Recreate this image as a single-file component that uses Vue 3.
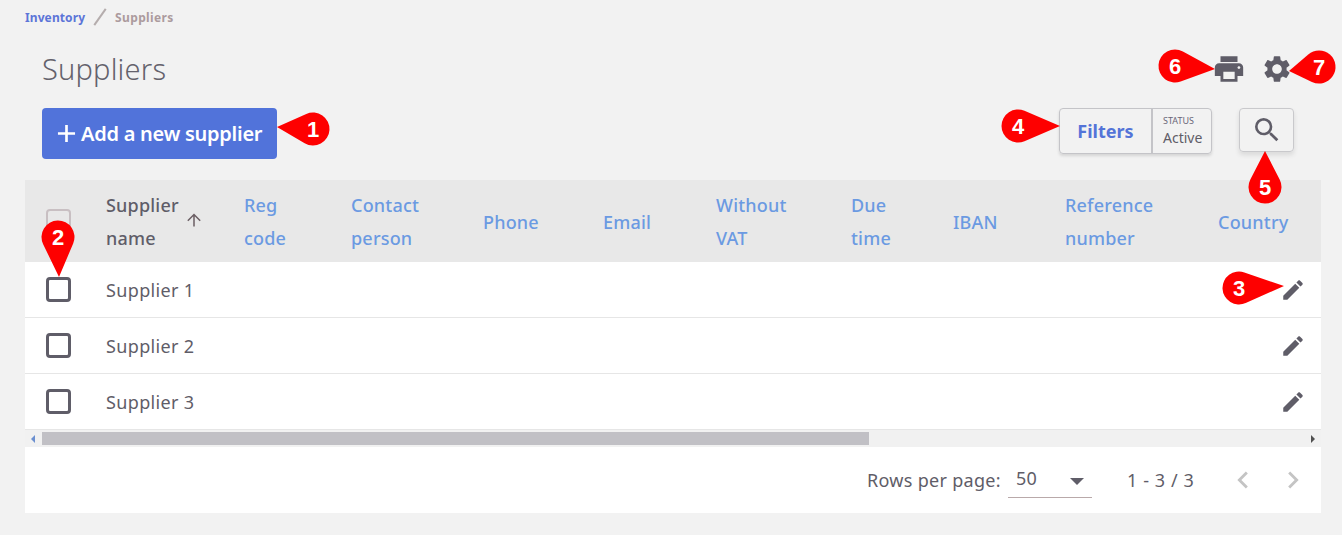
<template>
  <div class="page">
    <nav class="crumbs">
      <span class="crumb-link">Inventory</span>
      <span class="crumb-sep"></span>
      <span class="crumb-current">Suppliers</span>
    </nav>

    <div class="title-row">
      <h1 class="title">Suppliers</h1>
      <div class="title-icons">
        <svg class="icon-print" viewBox="0 0 24 24"><path d="M19 8H5c-1.66 0-3 1.34-3 3v6h4v4h12v-4h4v-6c0-1.66-1.34-3-3-3zm-3 11H8v-5h8v5zm3-7c-.55 0-1-.45-1-1s.45-1 1-1 1 .45 1 1-.45 1-1 1zm-1-9H6v4h12V3z" /></svg>
        <svg class="icon-gear" viewBox="0 0 24 24"><path d="M19.14 12.94c.04-.3.06-.61.06-.94 0-.32-.02-.64-.07-.94l2.03-1.58a.49.49 0 0 0 .12-.61l-1.92-3.32a.488.488 0 0 0-.59-.22l-2.39.96c-.5-.38-1.03-.7-1.62-.94l-.36-2.54a.484.484 0 0 0-.48-.41h-3.84c-.24 0-.43.17-.47.41l-.36 2.54c-.59.24-1.13.57-1.62.94l-2.39-.96c-.22-.08-.47 0-.59.22L2.74 8.87c-.12.21-.08.47.12.61l2.03 1.58c-.05.3-.09.63-.09.94s.02.64.07.94l-2.03 1.58a.49.49 0 0 0-.12.61l1.92 3.32c.12.22.37.29.59.22l2.39-.96c.5.38 1.03.7 1.62.94l.36 2.54c.05.24.24.41.48.41h3.84c.24 0 .44-.17.47-.41l.36-2.54c.59-.24 1.13-.56 1.62-.94l2.39.96c.22.08.47 0 .59-.22l1.92-3.32c.12-.22.07-.47-.12-.61l-2.01-1.58zM12 15.6c-1.98 0-3.6-1.62-3.6-3.6s1.62-3.6 3.6-3.6 3.6 1.62 3.6 3.6-1.62 3.6-3.6 3.6z" /></svg>
      </div>
    </div>

    <div class="action-row">
      <button class="add-btn">
        <svg class="add-plus" viewBox="0 0 20 20"><path d="M10 1v18M1 10h18" /></svg>
        Add a new supplier
      </button>
      <div class="actions-right">
        <div class="filters">
          <div class="filters-btn">Filters</div>
          <div class="filters-status">
            <span class="status-label">STATUS</span>
            <span class="status-value">Active</span>
          </div>
        </div>
        <button class="search-btn">
          <svg viewBox="0 0 24 24"><path d="M15.5 14h-.79l-.28-.27A6.471 6.471 0 0 0 16 9.5 6.5 6.5 0 1 0 9.5 16c1.61 0 3.09-.59 4.23-1.57l.27.28v.79l5 4.99L20.49 19l-4.99-5zm-6 0C7.01 14 5 11.99 5 9.5S7.01 5 9.5 5 14 7.01 14 9.5 11.99 14 9.5 14z" /></svg>
        </button>
      </div>
    </div>

    <div class="table-card">
      <div class="row head">
        <div class="cell-check"><span class="checkbox disabled"></span></div>
        <div class="head-sort">
          <span>Supplier<br />name</span>
          <svg class="sort-arrow" viewBox="0 0 16 16"><path d="M8 12V3.3M3.5 7.8 8 3.3l4.5 4.5" /></svg>
        </div>
        <div v-for="col in columns" :key="col" class="head-cell" v-html="col"></div>
      </div>

      <div v-for="name in suppliers" :key="name" class="row body">
        <div class="cell-check"><span class="checkbox"></span></div>
        <div class="cell-name">{{ name }}</div>
        <div class="cell-edit">
          <svg viewBox="0 0 24 24"><path d="M3 17.25V21h3.75L17.81 9.94l-3.75-3.75L3 17.25zM20.71 7.04c.39-.39.39-1.02 0-1.41l-2.34-2.34c-.39-.39-1.02-.39-1.41 0l-1.83 1.83 3.75 3.75 1.83-1.83z" /></svg>
        </div>
      </div>

      <div class="scrollbar">
        <span class="scroll-arrow left"></span>
        <div class="scroll-track"><div class="scroll-thumb"></div></div>
        <span class="scroll-arrow right"></span>
      </div>

      <div class="pager">
        <span class="pager-label">Rows per page:</span>
        <div class="pager-select">
          <span class="select-value">50</span>
          <span class="select-caret"></span>
        </div>
        <span class="pager-range">1 - 3 / 3</span>
        <svg class="pager-nav" viewBox="0 0 24 24"><path d="M15.41 7.41 14 6l-6 6 6 6 1.41-1.41L10.83 12z" /></svg>
        <svg class="pager-nav" viewBox="0 0 24 24"><path d="M10 6 8.59 7.41 13.17 12l-4.58 4.59L10 18l6-6z" /></svg>
      </div>
    </div>

    <!-- numbered callouts lying over the screenshot -->
    <svg class="callouts" width="1342" height="535">
      <g v-for="m in markers" :key="m.n">
        <path :d="m.d" fill="#fe0000" />
        <text :x="m.x" :y="m.y + 8" text-anchor="middle" class="callout-num">{{ m.n }}</text>
      </g>
    </svg>
  </div>
</template>

<script setup>
const columns = [
  'Reg<br>code',
  'Contact<br>person',
  'Phone',
  'Email',
  'Without<br>VAT',
  'Due<br>time',
  'IBAN',
  'Reference<br>number',
  'Country'
]

const suppliers = ['Supplier 1', 'Supplier 2', 'Supplier 3']

// teardrop: circle at x,y with a point running out to tx,ty
function drop(n, x, y, tx, ty, r = 16.5) {
  const dist = Math.hypot(tx - x, ty - y)
  const dir = Math.atan2(ty - y, tx - x)
  const spread = Math.acos(r / dist)
  const ax = x + r * Math.cos(dir + spread)
  const ay = y + r * Math.sin(dir + spread)
  const bx = x + r * Math.cos(dir - spread)
  const by = y + r * Math.sin(dir - spread)
  return { n, x, y, d: `M${tx} ${ty}L${ax} ${ay}A${r} ${r} 0 1 1 ${bx} ${by}Z` }
}

const markers = [
  drop(1, 313, 129, 277, 127),
  drop(2, 58, 237, 59, 277),
  drop(3, 1239, 288, 1284, 286),
  drop(4, 1018, 126, 1060, 126),
  drop(5, 1265, 187, 1265, 151),
  drop(6, 1175, 66, 1215, 69),
  drop(7, 1319, 67, 1289, 71)
]
</script>

<style>
html,
body {
  margin: 0;
  background: #f2f2f2;
}
</style>

<style scoped>
.page {
  position: relative;
  width: 1342px;
  height: 535px;
  overflow: hidden;
  background: #f2f2f2;
  font-family: "Noto Sans", "Open Sans", sans-serif;
  color: #5f5d68;
}

.crumbs {
  display: flex;
  align-items: center;
  height: 18px;
  padding: 8px 0 0 25px;
  font-size: 12px;
  font-weight: 700;
}

.crumb-link {
  color: #5c75d8;
  letter-spacing: 0.1px;
}

.crumb-sep {
  width: 2px;
  height: 20px;
  margin: 0 14px 0 14px;
  background: #b5adad;
  transform: rotate(35deg);
}

.crumb-current {
  color: #ac9b9e;
  letter-spacing: 0.35px;
}

.title-row {
  display: flex;
  align-items: center;
  justify-content: space-between;
  height: 50px;
  margin-top: 17px;
  padding: 0 49px 0 42px;
}

.title {
  margin: 0;
  font-size: 29px;
  font-weight: 300;
  letter-spacing: 0.2px;
  color: #64626c;
}

.title-icons {
  display: flex;
  align-items: center;
  gap: 15px;
  margin-top: 2px;
}

.icon-print {
  width: 34px;
  height: 34px;
  fill: #5f5d68;
}

.icon-gear {
  width: 32px;
  height: 32px;
  fill: #5f5d68;
}

.action-row {
  display: flex;
  align-items: flex-start;
  justify-content: space-between;
  height: 72px;
  margin-top: 15px;
  padding: 0 48px 0 42px;
}

.add-btn {
  display: flex;
  align-items: center;
  gap: 5px;
  width: 235px;
  height: 51px;
  padding: 0 0 0 15px;
  border: none;
  border-radius: 4px;
  background: #5173da;
  color: #fff;
  font-family: inherit;
  font-size: 20px;
  font-weight: 600;
  letter-spacing: -0.25px;
}

.add-plus {
  width: 19px;
  height: 19px;
  fill: none;
  stroke: #fff;
  stroke-width: 2.8;
}

.actions-right {
  display: flex;
  align-items: flex-start;
  gap: 27px;
}

.filters {
  display: flex;
  height: 46px;
  box-sizing: border-box;
  border: 1px solid #c4c4c8;
  border-radius: 4px;
  box-shadow: 0 2px 3px rgba(0, 0, 0, 0.12);
}

.filters-btn {
  display: flex;
  align-items: center;
  justify-content: center;
  width: 91px;
  border-right: 2px solid #c4c4c8;
  font-size: 18px;
  font-weight: 700;
  color: #5474d8;
}

.filters-status {
  display: flex;
  flex-direction: column;
  justify-content: center;
  width: 58px;
  padding-left: 10px;
  box-sizing: border-box;
}

.status-label {
  font-size: 9px;
  line-height: 13px;
  color: #6a6678;
}

.status-value {
  font-size: 14px;
  line-height: 21px;
}

.search-btn {
  display: flex;
  align-items: center;
  justify-content: center;
  width: 55px;
  height: 44px;
  padding: 0;
  border: 1px solid #c9c9cc;
  border-radius: 4px;
  background: transparent;
  box-shadow: 0 3px 5px rgba(0, 0, 0, 0.1);
}

.search-btn svg {
  width: 32px;
  height: 32px;
  fill: #5f5d68;
}

.table-card {
  width: 1296px;
  margin-left: 25px;
  background: #fff;
}

.row {
  display: grid;
  grid-template-columns: 81px 138px 107px 132px 120px 113px 135px 102px 112px 153px 103px;
  align-items: center;
}

.head {
  height: 82px;
  background: #e8e8e8;
  font-size: 18px;
  font-weight: 500;
  line-height: 33px;
  letter-spacing: 0.2px;
}

.cell-check {
  display: flex;
  padding-left: 21px;
}

.checkbox {
  width: 25px;
  height: 25px;
  box-sizing: border-box;
  border: 3px solid #5f5d68;
  border-radius: 4px;
}

.checkbox.disabled {
  border: 2px solid #c8bfc2;
}

.head-sort {
  display: flex;
  align-items: center;
  gap: 4px;
  padding-top: 2px;
  color: #5f5d68;
}

.sort-arrow {
  width: 22px;
  height: 22px;
  margin-top: -2px;
  fill: none;
  stroke: #6b5f64;
  stroke-width: 1.1;
}

.head-cell {
  padding-top: 2px;
  color: #6b9ae2;
}

.body {
  height: 56px;
  box-sizing: border-box;
  border-bottom: 1px solid #e6e6e6;
}

.cell-name {
  grid-column: 2 / 11;
  font-size: 18px;
  letter-spacing: 0.35px;
}

.cell-edit {
  display: flex;
  justify-content: flex-end;
  padding-right: 15px;
}

.cell-edit svg {
  width: 26px;
  height: 26px;
  fill: #5f5d68;
}

.scrollbar {
  display: flex;
  align-items: center;
  height: 17px;
  background: #f1f1f1;
}

.scroll-arrow {
  width: 0;
  height: 0;
  border-top: 4px solid transparent;
  border-bottom: 4px solid transparent;
}

.scroll-arrow.left {
  margin: 0 7px 0 6px;
  border-right: 4px solid #6b8fd0;
}

.scroll-arrow.right {
  margin: 0 6px 0 8px;
  border-left: 4px solid #505050;
}

.scroll-track {
  flex: 1;
  height: 13px;
}

.scroll-thumb {
  width: 827px;
  height: 100%;
  background: #c1c0c5;
}

.pager {
  display: flex;
  align-items: center;
  height: 66px;
  padding-left: 842px;
  font-size: 18px;
  letter-spacing: 0.3px;
}

.pager > * {
  flex-shrink: 0;
}

.pager-label {
  width: 141px;
  white-space: nowrap;
}

.pager-select {
  display: flex;
  align-items: center;
  justify-content: space-between;
  width: 84px;
  height: 34px;
  margin-top: 2px;
  padding: 0 8px 2px 8px;
  box-sizing: border-box;
  border-bottom: 1px solid #b9a9aa;
}

.select-value {
  margin-top: -3px;
}

.select-caret {
  width: 0;
  height: 0;
  margin-top: 3px;
  border-left: 7px solid transparent;
  border-right: 7px solid transparent;
  border-top: 7px solid #5f5d68;
}

.pager-range {
  width: 99px;
  margin-left: 35px;
  white-space: nowrap;
  letter-spacing: 0.6px;
}

.pager-nav {
  width: 34px;
  height: 34px;
  margin-right: 16px;
  fill: #c4c4c4;
}

.callouts {
  position: absolute;
  top: 0;
  left: 0;
  pointer-events: none;
}

.callout-num {
  font-family: "Liberation Sans", Arial, sans-serif;
  font-size: 22px;
  font-weight: 700;
  fill: #fff;
}
</style>
